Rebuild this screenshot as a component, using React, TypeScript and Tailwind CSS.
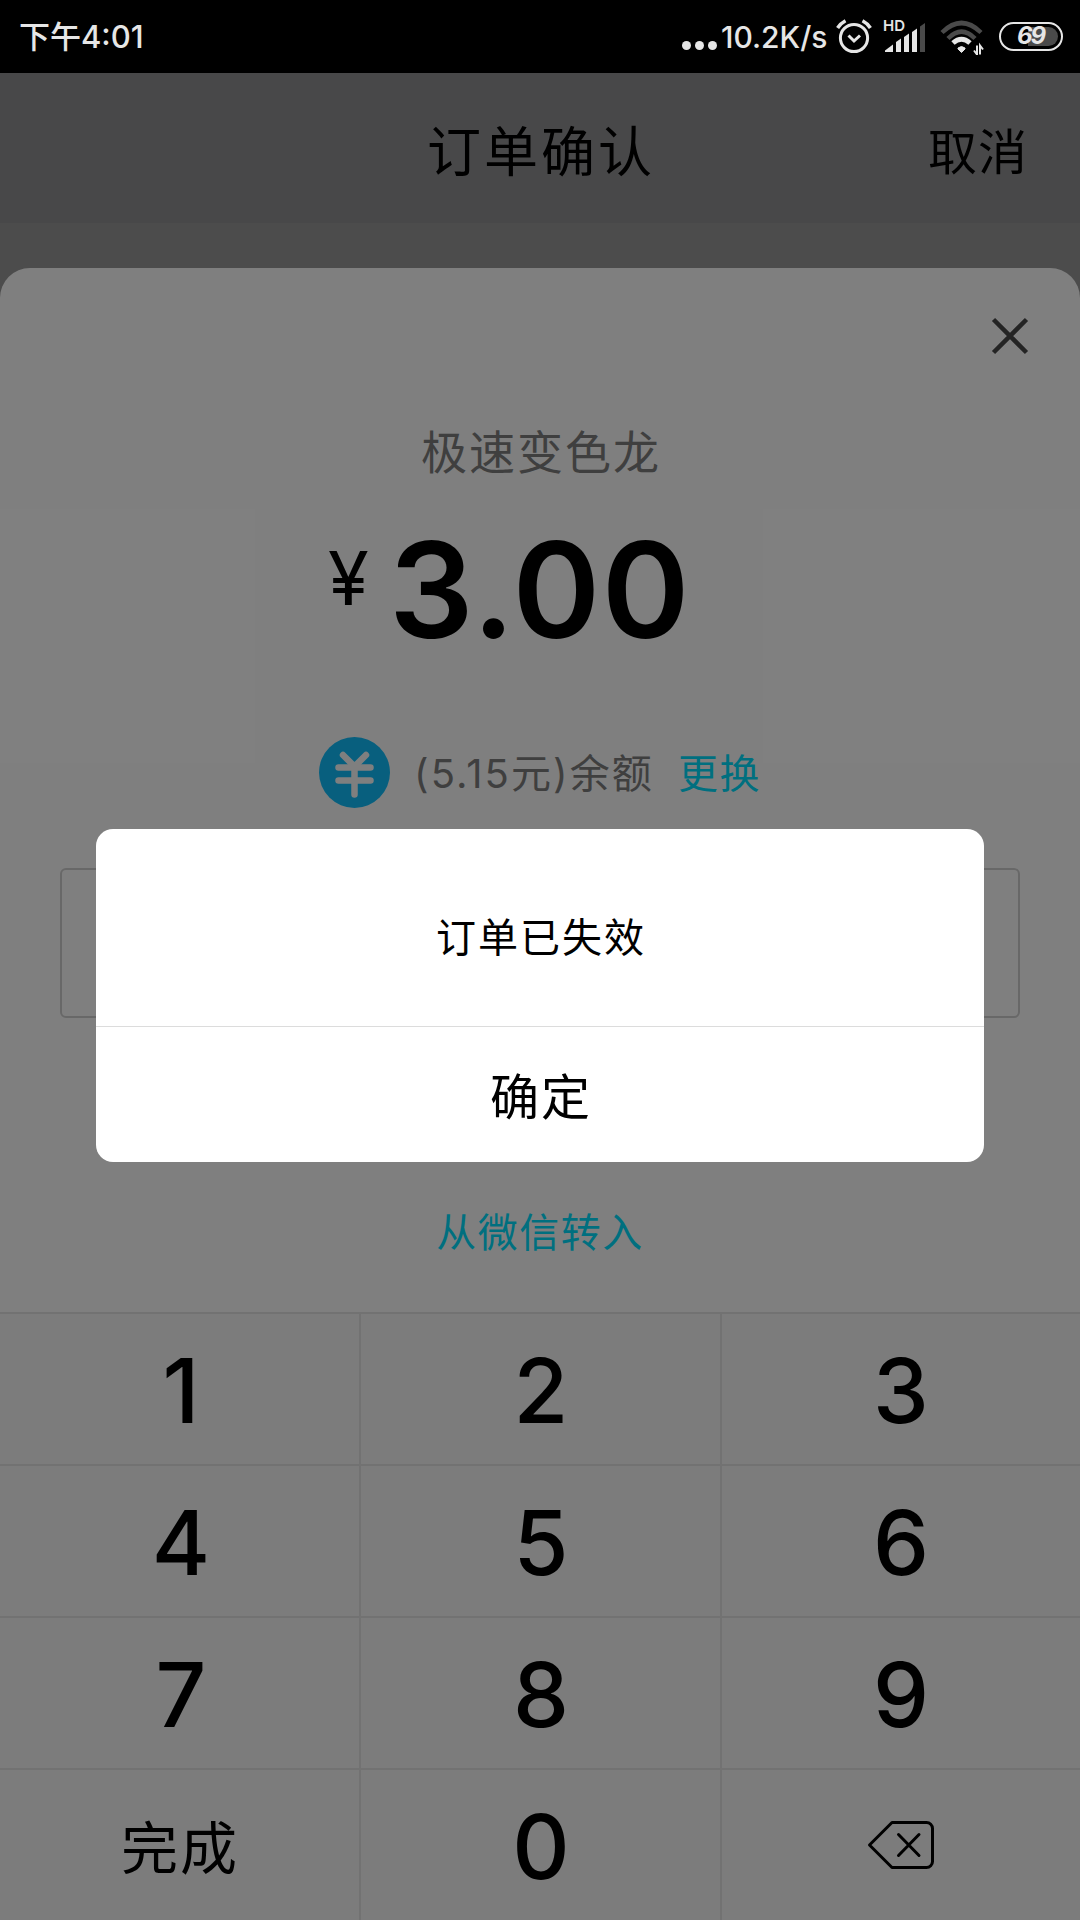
import type { ReactNode } from "react";
import clsx from "clsx";

const AlarmIcon = () => (
  <svg width="36" height="38" viewBox="0 0 36 38" fill="none" stroke="#e6e6e6">
    <circle cx="18" cy="20" r="13.6" strokeWidth="3" />
    <path d="M12.500 17.500l5.500 5.500 6-5.500" strokeWidth="3" />
    <path d="M1.600 10Q4.500 5.300 9.500 2.700M26.500 2.700Q31.500 5.300 34.400 10" strokeWidth="3.500" />
  </svg>
);

const SignalIcon = () => (
  <svg width="42" height="34" viewBox="0 0 42 34" fill="#e6e6e6">
    <path d="M1 32v-1.500l8-6V32z" />
    <path d="M12 32V22l5-3.500V32z" />
    <path d="M20 32V17l5-3.500V32z" />
    <path d="M28 32V12l5-3.500V32z" />
    <path d="M36 32V6.500l5-3.500v29z" fill="#4a4a4a" />
  </svg>
);

const WifiIcon = () => (
  <svg width="44" height="36" viewBox="0 0 44 36" fill="none">
    <path d="M2 13.500Q21.500 -5.500 41 13.500" stroke="#4a4a4a" strokeWidth="4.500" />
    <path d="M8 19.500Q21.500 6 35 19.500" stroke="#4a4a4a" strokeWidth="4.500" />
    <path d="M13 24Q21.500 16.500 30 24" stroke="#e6e6e6" strokeWidth="5" />
    <path d="M18 29q3.500-3 7 0v1l-3.500 3.500L18 30z" fill="#e6e6e6" stroke="#e6e6e6" strokeLinejoin="round" />
    <path d="M37 26.500v9l-3-4M40 35.500v-9l3 4" stroke="#e6e6e6" strokeWidth="2" />
  </svg>
);

const YenIcon = () => (
  <svg width="71" height="71" viewBox="0 0 71 71" fill="none">
    <circle cx="35.500" cy="35.500" r="35.500" fill="#10bffc" />
    <g stroke="#fff" strokeWidth="6.500" strokeLinecap="round">
      <path d="M24 18l11.500 11.500L47 18" />
      <path d="M19.500 30.500h32M19.500 43.500h32M35.500 30.500V57.500" />
    </g>
  </svg>
);

const BackspaceIcon = () => (
  <svg width="68" height="50" viewBox="0 0 68 50" fill="none" stroke="#000" strokeWidth="3">
    <path d="M25 2.500h34.500a6 6 0 0 1 6 6v33a6 6 0 0 1-6 6H25L2.500 25z" strokeLinejoin="round" />
    <path d="M31.500 14.500l20.500 21M52 14.500l-20.500 21" strokeLinecap="round" />
  </svg>
);

const StatusBar = () => (
  <div className="flex h-[73px] items-center bg-black pl-[19px] pr-[17px] text-[#e6e6e6]">
    <span className="text-[31px] font-medium leading-[74px]">下午4:01</span>
    <div className="ml-auto flex items-center">
      <div className="flex gap-1 pt-[17px]">
        <i className="size-[9px] rounded-full bg-[#e6e6e6]" />
        <i className="size-[9px] rounded-full bg-[#e6e6e6]" />
        <i className="size-[9px] rounded-full bg-[#e6e6e6]" />
      </div>
      <span className="ml-1 w-[109px] whitespace-nowrap text-[30px] font-medium leading-[74px]">10.2K/s</span>
      <div className="ml-[6px]">
        <AlarmIcon />
      </div>
      <div className="relative ml-3">
        <SignalIcon />
        <span className="absolute -left-px -top-[2px] text-[15px] font-semibold leading-4">HD</span>
      </div>
      <div className="ml-[14px]">
        <WifiIcon />
      </div>
      <div className="relative ml-[15px] h-[29px] w-16 rounded-full border-[2.5px] border-[#e6e6e6] p-[3px]">
        <div className="ml-6 h-full rounded-r-full bg-[#4a4a4a]" />
        <span className="absolute inset-0 pr-px text-center text-[24px] font-bold italic leading-[24px] tracking-[-2px]">
          69
        </span>
      </div>
    </div>
  </div>
);

const Key = ({ children, small }: { children: ReactNode; small?: boolean }) => (
  <button
    className={clsx(
      "flex h-[152px] items-center justify-center border-t-2 border-[#e4e4e4]",
      small ? "pt-2 text-[57px] tracking-[2px]" : "pl-[2px] text-[89px] font-medium"
    )}
  >
    {children}
  </button>
);

const App = () => {
  const digits = ["1", "2", "3", "4", "5", "6", "7", "8", "9", "0"];
  const keys = digits.map((d) => (
    <Key key={d}>
      <span className="pt-[3px] leading-[145px]">{d}</span>
    </Key>
  ));

  return (
    <div className="relative h-[1920px] w-[1080px] overflow-hidden bg-[#999] font-['Inter','Noto_Sans_CJK_SC',sans-serif] text-black">
      <StatusBar />

      <header className="grid h-[150px] grid-cols-3 items-center bg-[#919193]">
        <h1 className="col-start-2 pl-[2px] pt-[5px] text-center text-[54px] leading-[150px] tracking-[3px]">
          订单确认
        </h1>
        <span className="pr-[52px] pt-[5px] text-right text-[49px] leading-[150px] tracking-[1px]">取消</span>
      </header>

      <section className="mt-[45px] flex h-[1652px] flex-col rounded-t-[30px] bg-white">
        <div className="flex h-[134px] justify-end pr-[51px] pt-[49px]">
          <svg width="38" height="38" viewBox="0 0 38 38" stroke="#484848" strokeWidth="4.500">
            <path d="M2.500 2.500l33 33M35.500 2.500l-33 33" />
          </svg>
        </div>

        <div className="h-[94px] pl-[2px] text-center text-[46px] leading-[101px] tracking-[2px] text-[#7e7e7e]">
          极速变色龙
        </div>
        <div className="flex h-[193px] pl-[328px]">
          <span className="w-[61px] text-[74px] leading-[165px]">¥</span>
          <span className="text-[133px] font-semibold leading-[187px] tracking-[1.500px]">3.00</span>
        </div>

        <div className="flex h-[167px] items-center pl-[319px] pb-px text-[40px] leading-[71px] tracking-[1.500px]">
          <YenIcon />
          <span className="ml-6 pt-[3px] tracking-[2.100px] text-[#7e7e7e]">(5.15元)余额</span>
          <a className="ml-6 pt-[3px] text-[#00dfff]">更换</a>
        </div>

        <div className="mx-[60px] mt-3 h-[150px] rounded-md border-2 border-[#d0d0d0]" />
        <a className="mt-[183px] text-center text-[40px] leading-[64px] tracking-[1.500px] text-[#00dfff]">
          从微信转入
        </a>

        <div className="mt-auto grid grid-cols-3 bg-[#f8f8f8] bg-[linear-gradient(to_right,transparent_359px,#e4e4e4_359px,#e4e4e4_361px,transparent_361px,transparent_720px,#e4e4e4_720px,#e4e4e4_722px,transparent_722px)]">
          {keys.slice(0, 9)}
          <Key small>完成</Key>
          {keys[9]}
          <Key>
            <BackspaceIcon />
          </Key>
        </div>
      </section>

      {/* modal */}
      <div className="absolute inset-x-0 bottom-0 top-[73px] bg-black/50 px-24 pt-[756px]">
        <div className="h-[333px] overflow-hidden rounded-[17px] bg-white text-center">
          <p className="h-[197px] pl-[2px] text-[40px] leading-[218px] tracking-[2px]">订单已失效</p>
          <button className="h-[136px] w-full border-t border-[#dcdcdc] pl-[2px] pt-[7px] text-[49px] leading-[128px] tracking-[2px]">
            确定
          </button>
        </div>
      </div>
    </div>
  );
};

export default App;
